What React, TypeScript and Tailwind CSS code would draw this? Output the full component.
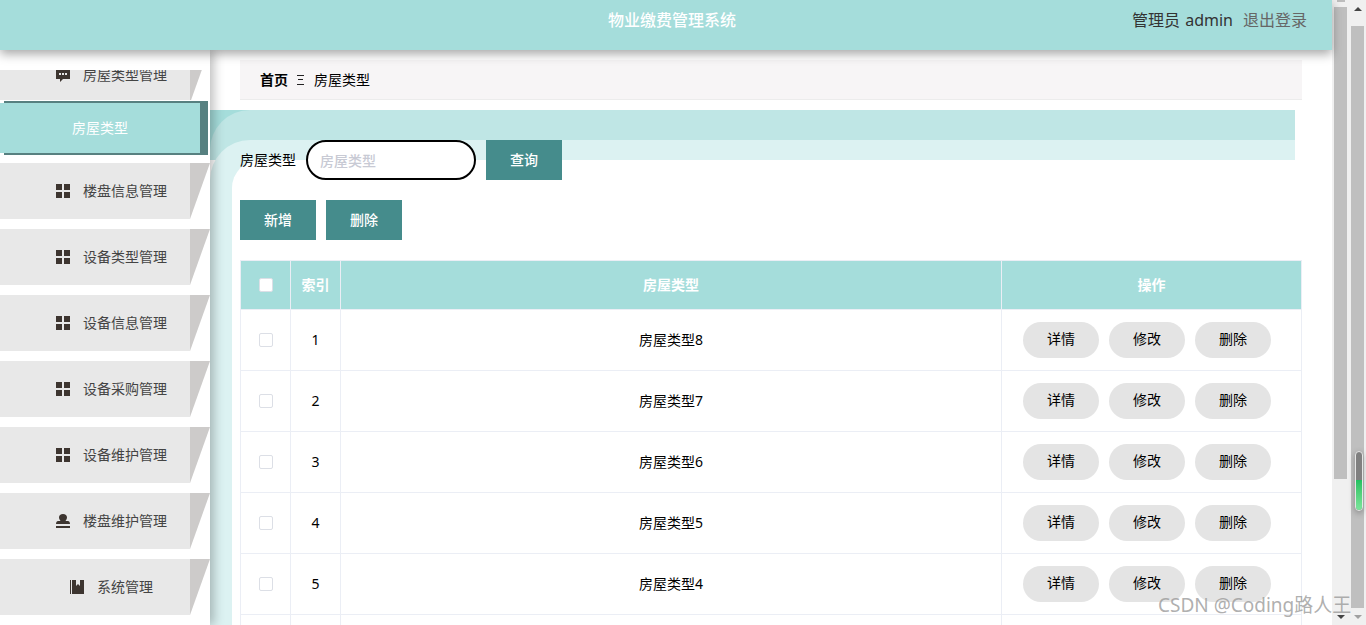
import type { ReactNode } from "react";

const rows = [
  { id: 1, name: "房屋类型8" },
  { id: 2, name: "房屋类型7" },
  { id: 3, name: "房屋类型6" },
  { id: 4, name: "房屋类型5" },
  { id: 5, name: "房屋类型4" },
  { id: 6, name: "房屋类型3" },
];

function GridIcon() {
  return (
    <svg width="14" height="14" viewBox="0 0 14 14" fill="#3d3530">
      <rect x="0" y="0" width="6" height="6" />
      <rect x="8" y="0" width="6" height="6" />
      <rect x="0" y="8" width="6" height="6" />
      <rect x="8" y="8" width="6" height="6" />
    </svg>
  );
}

function ChatIcon() {
  return (
    <svg width="14" height="14" viewBox="0 0 14 14">
      <path d="M0 0h14v11H7l-3 3v-3H0z" fill="#3d3530" />
      <rect x="3" y="5" width="2" height="2" fill="#e8e8e8" />
      <rect x="6" y="5" width="2" height="2" fill="#e8e8e8" />
      <rect x="9" y="5" width="2" height="2" fill="#e8e8e8" />
    </svg>
  );
}

function StampIcon() {
  return (
    <svg width="14" height="14" viewBox="0 0 14 14" fill="#3d3530">
      <path d="M7 0c2.500 0 4 1.500 4 3.500 0 1.500-1 2.500-1.500 3.500H12c1 0 2 1 2 3H0c0-2 1-3 2-3h2.500C4 6 3 5 3 3.500 3 1.500 4.500 0 7 0z" />
      <rect x="0" y="12" width="14" height="2" />
    </svg>
  );
}

function BookIcon() {
  return (
    <svg width="14" height="14" viewBox="0 0 14 14" fill="#3d3530">
      <rect x="0" y="0" width="1" height="14" />
      <rect x="2" y="0" width="2" height="14" />
      <path d="M4 0h2v6l2-2 2 2V0h4v14H4z" />
    </svg>
  );
}

function MenuItem({ label, icon, short }: { label: string; icon: ReactNode; short?: boolean }) {
  return (
    <div className="flex h-14 w-[210px]">
      <div className={`flex h-14 w-[190px] items-center bg-[#e8e8e8] text-sm text-[#444] ${short ? "pl-[70px]" : "pl-[56px]"}`}>
        <span className="flex w-[27px] shrink-0">{icon}</span>
        <span className="whitespace-nowrap">{label}</span>
      </div>
      <div className="h-14 w-5 bg-[#cdcbca] [clip-path:polygon(0_0,100%_0,0_100%)]" />
    </div>
  );
}

function Sidebar() {
  const items = [
    { label: "楼盘信息管理", icon: <GridIcon /> },
    { label: "设备类型管理", icon: <GridIcon /> },
    { label: "设备信息管理", icon: <GridIcon /> },
    { label: "设备采购管理", icon: <GridIcon /> },
    { label: "设备维护管理", icon: <GridIcon /> },
    { label: "楼盘维护管理", icon: <StampIcon /> },
  ];
  return (
    <aside className="relative z-10 flex w-[210px] shrink-0 flex-col bg-white pt-5 shadow-[4px_0_10px_rgba(0,0,0,0.25)]">
      <div className="h-[30px] overflow-hidden">
        <div className="-mt-[23px]">
          <MenuItem label="房屋类型管理" icon={<ChatIcon />} />
        </div>
      </div>
      {/* active item: dark plate offset behind the teal face */}
      <div className="relative mt-px h-[54px] w-[208px]">
        <div className="ml-1 h-[54px] w-[204px] bg-[#578080]" />
        <div className="absolute left-0 top-[2px] flex h-[50px] w-[200px] items-center justify-center bg-[#a5dddb] text-sm text-white">
          房屋类型
        </div>
      </div>
      <div className="mt-2 flex flex-col gap-[10px]">
        {items.map((item) => (
          <MenuItem key={item.label} label={item.label} icon={item.icon} />
        ))}
        <MenuItem label="系统管理" icon={<BookIcon />} short />
      </div>
    </aside>
  );
}

function PageButton({ label }: { label: string }) {
  return (
    <button className="h-10 w-[76px] bg-[#458c8c] text-sm font-medium text-white">{label}</button>
  );
}

function PillButton({ label }: { label: string }) {
  return (
    <button className="h-9 w-[76px] rounded-full bg-[#e4e4e4] pb-0.5 text-sm text-black">{label}</button>
  );
}

function Check() {
  return <span className="mx-auto block size-[14px] rounded-[2px] border border-[#dcdfe6] bg-white" />;
}

function DataTable() {
  return (
    <table className="mt-5 w-[1061px] table-fixed border-collapse text-sm text-black">
      <colgroup>
        <col className="w-[50px]" />
        <col className="w-[50px]" />
        <col className="w-[661px]" />
        <col className="w-[300px]" />
      </colgroup>
      <thead>
        <tr className="h-[49px] bg-[#a5dddb] text-sm font-bold text-white">
          <th className="border border-[#ebeef5]"><Check /></th>
          <th className="border border-[#ebeef5]">索引</th>
          <th className="border border-[#ebeef5]">房屋类型</th>
          <th className="border border-[#ebeef5]">操作</th>
        </tr>
      </thead>
      <tbody>
        {rows.map((row) => (
          <tr key={row.id} className="h-[61px] text-center">
            <td className="border border-[#ebeef5]"><Check /></td>
            <td className="border border-[#ebeef5]">{row.id}</td>
            <td className="border border-[#ebeef5]">{row.name}</td>
            <td className="border border-[#ebeef5]">
              <div className="flex gap-[10px] pl-[21px]">
                <PillButton label="详情" />
                <PillButton label="修改" />
                <PillButton label="删除" />
              </div>
            </td>
          </tr>
        ))}
      </tbody>
    </table>
  );
}

function Content() {
  return (
    <main className="relative flex-1 overflow-hidden bg-white">
      {/* decorative bands behind the form */}
      <div className="absolute left-0 top-[60px] size-10 bg-[#a5dddb]" />
      <div className="absolute left-0 right-[37px] top-[60px] h-[50px] rounded-tl-[40px] bg-[#bfe6e5]" />
      <div className="absolute bottom-0 left-0 right-[37px] top-[90px] rounded-tl-[40px] bg-[#dcf2f2]" />
      <div className="absolute bottom-0 left-[22px] right-0 top-[110px] rounded-tl-[28px] bg-white" />

      <div className="relative flex flex-col px-[30px] pt-[10px]">
        <div className="flex h-10 items-center border-b border-[#ececec] bg-[#f7f5f6] pl-5 text-sm text-black">
          <span className="font-bold">首页</span>
          <svg className="ml-[9px] mr-[10px]" width="7" height="10" viewBox="0 0 7 10" fill="#222">
            <rect x="0" y="0" width="7" height="1" />
            <rect x="1" y="4" width="5" height="1" />
            <rect x="0" y="9" width="7" height="1" />
          </svg>
          <span>房屋类型</span>
        </div>

        <div className="mt-10 flex h-10 items-center text-sm text-black">
          <span>房屋类型</span>
          <input
            placeholder="房屋类型"
            className="ml-[10px] h-10 w-[170px] rounded-full border-2 border-black bg-white pl-3 text-sm font-medium outline-none placeholder:text-[#c8cad4]"
          />
          <div className="ml-[10px]">
            <PageButton label="查询" />
          </div>
        </div>

        <div className="mt-5 flex gap-[10px]">
          <PageButton label="新增" />
          <PageButton label="删除" />
        </div>

        <DataTable />
      </div>
    </main>
  );
}

function Scrollbars() {
  return (
    <div className="flex h-full w-[34px] shrink-0 bg-[#f0f0f0] pl-[2px]">
      <div className="flex w-[13px] flex-col items-center">
        <div className="h-[2px] w-2 bg-[#bdbdbd]" />
        <div className="mt-[5px] h-[472px] w-[13px] bg-[#bfbfbf]" />
        <div className="mt-auto mb-[6px] size-0 border-x-[4px] border-t-[4px] border-x-transparent border-t-[#444]" />
      </div>
      <div className="relative ml-1 flex w-[13px] flex-col items-center">
        <div className="mt-[7px] size-0 border-x-[4px] border-b-[4px] border-x-transparent border-b-[#444]" />
        <div className="mt-[15px] h-[582px] w-[13px] bg-[#bfbfbf]" />
        <div className="mt-auto mb-[6px] size-0 border-x-[4px] border-t-[4px] border-x-transparent border-t-[#a0a0a0]" />
        <div className="absolute left-[4px] top-[451px] h-[60px] w-2 overflow-hidden rounded-[4px] border border-[#e6e6e6] bg-[#808080] shadow-[0_2px_6px_rgba(0,0,0,0.3)]">
          <div className="mt-[28px] h-[32px] bg-gradient-to-b from-[#1fc060] to-[#80e8a0]" />
        </div>
      </div>
    </div>
  );
}

export default function App() {
  return (
    <div className="relative flex h-[625px] w-[1366px] overflow-hidden bg-white font-['Noto_Sans','Noto_Sans_CJK_SC',sans-serif]">
      <div className="flex w-[1332px] shrink-0 flex-col">
        <header className="relative z-20 flex h-[50px] shrink-0 items-start bg-[#a5dddb] shadow-[0_4px_10px_rgba(0,0,0,0.35)]">
          <div className="pt-2 pl-[608px] text-base font-medium leading-[24px] text-white">物业缴费管理系统</div>
          <div className="ml-auto flex gap-[10px] pr-[25px] pt-2 text-base leading-[24px]">
            <span className="text-[#333] [word-spacing:1px]">管理员 admin</span>
            <span className="text-[#666]">退出登录</span>
          </div>
        </header>
        <div className="flex min-h-0 flex-1">
          <Sidebar />
          <Content />
        </div>
      </div>
      <Scrollbars />
      <div className="absolute left-[1158px] top-[591px] z-30 whitespace-nowrap text-[19px] text-[#9a9a9a]/80">
        CSDN @Coding路人王
      </div>
    </div>
  );
}
